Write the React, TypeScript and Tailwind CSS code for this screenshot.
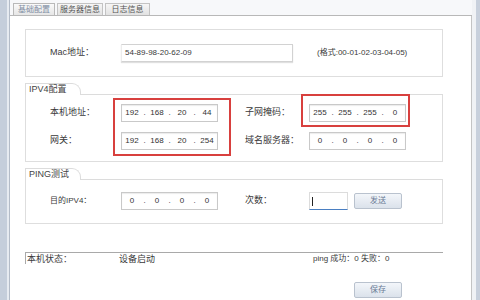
function IpBox({ parts, className = "" }: { parts: string[]; className?: string }) {
  return (
    <div
      className={`flex h-[18px] w-[97px] items-center border border-[#c9c9c9] bg-white px-[1px] text-[8px] text-[#333] shadow-[inset_0_1px_1px_rgba(0,0,0,0.08)] ${className}`}
    >
      {parts.map((p, i) => (
        <div key={i} className="flex items-center">
          {i > 0 && <span className="w-[7px] text-center">.</span>}
          <span className="w-[18px] text-center">{p}</span>
        </div>
      ))}
    </div>
  );
}

function Legend({ title }: { title: string }) {
  return (
    <div className="flex h-[12px] items-end">
      <div className="flex h-[12px] w-[56px] items-center rounded-tr-[9px] border-l border-r border-t border-[#dcdcdc] pl-[3px] text-[9px] leading-none text-[#444]">
        {title}
      </div>
      <div className="flex-1 border-b border-[#dcdcdc]" />
    </div>
  );
}

function GrayButton({ children }: { children: React.ReactNode }) {
  return (
    <button className="flex h-[16px] w-[48px] items-center justify-center rounded-[2px] border border-[#b9c2ce] bg-gradient-to-b from-[#f3f6fa] to-[#dbe2eb] text-[8px] text-[#6a7a95]">
      {children}
    </button>
  );
}

export default function App() {
  return (
    <div className="flex h-[300px] w-[480px] overflow-hidden bg-white font-['Liberation_Sans','Noto_Sans_CJK_SC',sans-serif] text-[9px] text-[#3a3a3a]">
      {/* left window frame */}
      <div className="flex">
        <div className="w-[7px] bg-[#c5cedb]" />
        <div className="w-[2px] bg-[#e7ebf1]" />
        <div className="w-[1px] bg-[#b4bcc8]" />
      </div>

      <div className="flex flex-1 flex-col">
        {/* tabs */}
        <div className="flex h-[16px] items-end gap-[2px] border-b border-[#b8b8b8] bg-[#f7f8fa] pl-[3px]">
          <div className="flex h-[12px] w-[42px] items-center justify-center border border-b-0 border-[#b9b9b9] bg-gradient-to-b from-[#fafafa] to-[#e6e6e6] text-[8px] text-[#7d8ca3]">
            基础配置
          </div>
          <div className="flex h-[12px] w-[46px] items-center justify-center border border-b-0 border-[#c3c3c3] bg-gradient-to-b from-[#f6f6f6] to-[#e2e2e2] text-[8px] text-[#555]">
            服务器信息
          </div>
          <div className="flex h-[12px] w-[45px] items-center justify-center border border-b-0 border-[#c3c3c3] bg-gradient-to-b from-[#f6f6f6] to-[#e2e2e2] text-[8px] text-[#555]">
            日志信息
          </div>
        </div>

        {/* content */}
        <div className="flex flex-1 flex-col border-r border-[#c4c4c4] pl-[15px]">
          {/* Mac */}
          <div className="mt-[13px] flex h-[48px] w-[418px] items-center border border-[#dedede] pl-[24px]">
            <span className="w-[71px]">Mac地址：</span>
            <div className="flex h-[18px] w-[172px] items-center border border-[#d2d2d2] border-l-[#ececec] pl-[3px] text-[8px] shadow-[0_1px_1px_rgba(0,0,0,0.12)]">
              54-89-98-20-62-09
            </div>
            <span className="ml-[24px] text-[8px]">(格式:00-01-02-03-04-05)</span>
          </div>

          {/* IPV4 */}
          <div className="mt-[6px] w-[418px]">
            <Legend title="IPV4配置" />
            <div className="relative h-[67px] border-b border-l border-r border-[#dedede] pl-[24px] pt-[9px]">
              <div className="grid grid-cols-[71px_97px_27px_64px_97px] items-center gap-y-[10px]">
                <span>本机地址：</span>
                <IpBox parts={["192", "168", "20", "44"]} />
                <span />
                <span>子网掩码：</span>
                <IpBox parts={["255", "255", "255", "0"]} />
                <span>网关：</span>
                <IpBox parts={["192", "168", "20", "254"]} />
                <span />
                <span>域名服务器：</span>
                <IpBox parts={["0", "0", "0", "0"]} />
              </div>
              <div className="absolute left-[87px] top-[3px] h-[58px] w-[118px] border-2 border-[#d8403e]" />
              <div className="absolute left-[275px] top-[-1px] h-[33px] w-[109px] border-2 border-[#d8403e]" />
            </div>
          </div>

          {/* PING */}
          <div className="mt-[6px] w-[418px]">
            <Legend title="PING测试" />
            <div className="flex h-[44px] items-start border-b border-l border-r border-[#dedede] pl-[24px] pt-[12px]">
              <div className="flex h-[18px] items-center">
                <span className="w-[71px] text-[8px]">目的IPV4：</span>
                <IpBox parts={["0", "0", "0", "0"]} />
                <span className="ml-[27px] w-[64px]">次数：</span>
                <div className="flex h-[18px] w-[39px] items-center border border-[#dcdcdc] border-b-[#4a7fc2] pl-[2px]">
                  <span className="h-[9px] w-[1px] bg-[#222]" />
                </div>
                <div className="ml-[6px]">
                  <GrayButton>发送</GrayButton>
                </div>
              </div>
            </div>
          </div>

          {/* status */}
          <div className="mt-[28px] flex w-[418px] border-t border-[#a9a9a9]">
            <span className="h-[11px] w-[94px] border-l border-[#a9a9a9] pl-[1px] leading-[12px]">本机状态：</span>
            <span className="w-[194px] leading-[12px]">设备启动</span>
            <span className="text-[8px] leading-[12px]">ping 成功：0 失败：0</span>
          </div>

          <div className="mt-[17px] w-[418px] pl-[329px]">
            <GrayButton>保存</GrayButton>
          </div>
        </div>
      </div>

      {/* right window frame */}
      <div className="flex">
        <div className="w-[4px] bg-[#f0f2f5]" />
        <div className="w-[4px] bg-[#c8d0dc]" />
      </div>
    </div>
  );
}
